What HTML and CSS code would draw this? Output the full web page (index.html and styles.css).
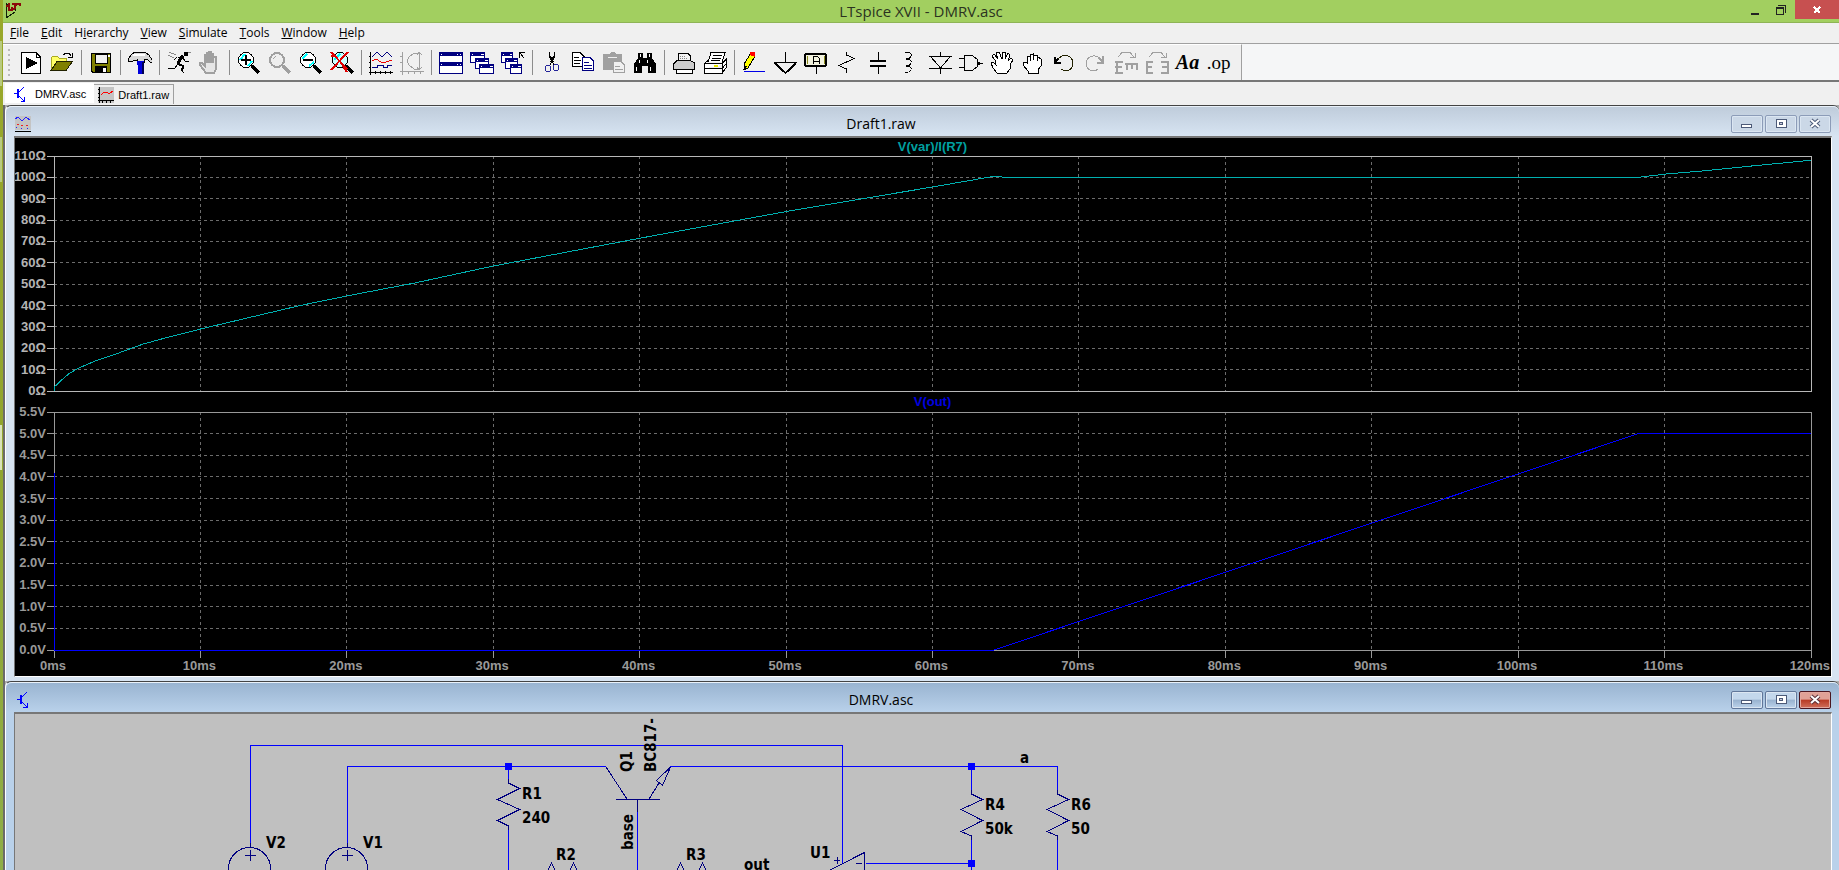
FILE: index.html
```html
<!DOCTYPE html>
<html lang="en">
<head>
<meta charset="utf-8">
<title>LTspice XVII - DMRV.asc</title>
<link rel="stylesheet" href="styles.css">
</head>
<body>
<div class="desktop">
<div class="app">
  <header class="titlebar">
    <svg class="app-icon" width="17" height="18" viewBox="0 0 17 18"><path d="M1 1V16L10 10M1 2L4 4M10 9V5" stroke="#10200a" fill="none"/><path d="M4 1V9M4 8H8M7 2H16M15 2V4M11 2L9 8M7 5V8M4 4H1" stroke="#8b0a0a" stroke-width="2" fill="none"/></svg>
    <h1 class="app-title">LTspice XVII - DMRV.asc</h1>
    <div class="app-buttons">
      <button class="app-btn" aria-label="Minimize"><svg width="10" height="12"><path d="M1 9.500H9" stroke="#222" stroke-width="2"/></svg></button>
      <button class="app-btn" aria-label="Restore"><svg width="12" height="12"><path d="M1.500 4V10.500H8.500V3.500H1M1 4.500H9M3 1.500H10.500V9" fill="none" stroke="#222"/></svg></button>
      <button class="app-btn close" aria-label="Close"><svg width="10" height="10" viewBox="0 0 10 10"><path d="M2 2L8 8M8 2L2 8" stroke="#fff" stroke-width="2"/></svg></button>
    </div>
  </header>

  <nav class="menubar">
    <button><u>F</u>ile</button><button><u>E</u>dit</button><button>H<u>i</u>erarchy</button><button><u>V</u>iew</button><button><u>S</u>imulate</button><button><u>T</u>ools</button><button><u>W</u>indow</button><button><u>H</u>elp</button>
  </nav>

  <div class="toolbar-row">
  <div class="toolbar" role="toolbar">
    <span class="grip"></span>
    <button aria-label="Control panel run"><svg viewBox="0 0 24 24"><path d="M2.500 1.500H17L21.500 6V22.500H2.500Z" fill="#fff" stroke="#000"/><path d="M17 1V6H22" fill="none" stroke="#000"/><path d="M7 6V18L19 12Z" fill="#000"/></svg></button>
    <button aria-label="Open"><svg viewBox="0 0 24 24"><path d="M1 19V7L3 5H7L9 7H16V11" fill="#ff6" stroke="#a9a920"/><path d="M1 19.500L7 10.500H22.500L16 19.500Z" fill="#808000" stroke="#222200"/><path d="M13 4L16 2H19L21 5M18 6H22V2" fill="none" stroke="#000"/></svg></button>
    <i class="sep"></i>
    <button aria-label="Save"><svg viewBox="0 0 24 24"><path d="M2.500 2.500H21.500V21.500H4L2.500 20Z" fill="#808000" stroke="#000"/><path d="M6 3H18V12H6Z" fill="#f0f0f0" stroke="#000"/><path d="M6 15H18V22H6Z" fill="#000"/><path d="M14 17H17V21H14Z" fill="#fff"/><path d="M19 4H21V6H19Z" fill="#fff"/></svg></button>
    <i class="sep"></i>
    <button aria-label="Control panel"><svg viewBox="0 0 24 24"><path d="M0 8L4 3L7 1H17L21 4L24 9V11H22L19 8L16 9V11H9V9L5 10H0Z" fill="#d8d8d8" stroke="#000"/><path d="M5 4H17" stroke="#fff" stroke-width="2"/><path d="M9 10H16V14H15V23H10V14H9Z" fill="#00d"/><path d="M14.500 11V23" stroke="#005" stroke-width="2"/></svg></button>
    <i class="sep"></i>
    <button aria-label="Run"><svg viewBox="0 0 24 24"><path d="M17 1H21V5H17Z" fill="#000"/><path d="M16 5L13 8L11 13" fill="none" stroke="#000" stroke-width="3"/><path d="M10.500 6H14M10 6L7 9M16 7L18 10H22M12 13L16 15L15 20L17 22M11 13L8 17L1 17" fill="none" stroke="#000" stroke-width="1"/><path d="M11 13L16 15L15 20" fill="none" stroke="#000" stroke-width="2"/><path d="M2 1L9 4M1 4L7 7M21 1L24 1" stroke="#888"/></svg></button>
    <button aria-label="Halt"><svg viewBox="0 0 24 24"><path d="M8 22L2 14V12H4L7 15V4H9V12V2H11V12V1H13V12V3H15V12V6H18V18L16 22Z" fill="#e6e6e6" stroke="#a0a0a0" stroke-width="2"/></svg></button>
    <i class="sep"></i>
    <button aria-label="Zoom area"><svg viewBox="0 0 24 24"><circle cx="9" cy="9" r="7.500" fill="#fff" stroke="#000"/><path d="M3 9L8 3M11 15L15 10" stroke="#0ff" stroke-width="2"/><path d="M9 4V14M4 9H14" stroke="#000" stroke-width="2"/><path d="M15 15L22 22" stroke="#000" stroke-width="3"/></svg></button>
    <button aria-label="Zoom back"><svg viewBox="0 0 24 24"><circle cx="9" cy="9" r="7" fill="#eee" stroke="#a0a0a0" stroke-width="2"/><path d="M5 8L8 5" stroke="#a0a0a0"/><path d="M15 15L22 22" stroke="#a0a0a0" stroke-width="3"/></svg></button>
    <button aria-label="Zoom out"><svg viewBox="0 0 24 24"><circle cx="9" cy="9" r="7.500" fill="#fff" stroke="#000"/><path d="M3 8L8 3M10 15L15 11" stroke="#0ff" stroke-width="2"/><path d="M4 9H14" stroke="#000" stroke-width="2"/><path d="M15 15L22 22" stroke="#000" stroke-width="3"/></svg></button>
    <button aria-label="Zoom full"><svg viewBox="0 0 24 24"><circle cx="10" cy="9" r="7.500" fill="#cff" stroke="#000"/><path d="M4 9L10 3" stroke="#0ff" stroke-width="2"/><path d="M16 15L23 22" stroke="#000" stroke-width="3"/><path d="M1 1L17 18M18 1L1 19M1 5H6M13 15L17 21" stroke="#e00000" stroke-width="2"/></svg></button>
    <i class="sep"></i>
    <button aria-label="Autorange"><svg viewBox="0 0 24 24"><path d="M1.500 1V24M0 21.500H24M0 5.500H2M0 11.500H2M0 16.500H2M6.500 20V23M11.500 20V23M16.500 20V23M21.500 20V23" stroke="#000"/><path d="M3 6L8 1L13 6L18 1L23 6M3 16H8V14H14V16H18V14H23" fill="none" stroke="#000080"/><path d="M3 10L7 8L12 11H17L23 9" fill="none" stroke="#e00" stroke-width="1"/></svg></button>
    <button aria-label="Nyquist plot"><svg viewBox="0 0 24 24"><path d="M2.500 1V24M0 20.500H24M0 5.500H2M0 11.500H2M8.500 20V23M14.500 20V23M20.500 20V23M19.500 1V19M17 4L19 1L22 4M17 16L19 19L22 16M19 2H14L9 6L7 10L9 14L14 18H19" fill="none" stroke="#a0a0a0"/></svg></button>
    <i class="sep"></i>
    <button aria-label="Tile windows"><svg viewBox="0 0 24 24"><path d="M.500 1.500H23.500V22.500H.500Z" fill="#fff" stroke="#000080"/><path d="M0 1H24V5H0ZM0 11H24V15H0Z" fill="#000080"/><path d="M2 3H3M18 3H19M21 3H22M2 13H3M18 13H19M21 13H22" stroke="#fff"/></svg></button>
    <button aria-label="Cascade windows"><svg viewBox="0 0 24 24"><g fill="#fff" stroke="#000080"><path d="M.500 1.500H14.500V11.500H.500Z"/><path d="M5.500 7.500H18.500V17.500H5.500Z"/><path d="M9.500 13.500H23.500V22.500H9.500Z"/></g><path d="M0 1H15V5H0ZM5 7H19V11H5ZM9 13H24V17H9Z" fill="#000080"/><path d="M2 3H3M11 3H14M7 9H8M15 9H18M11 15H12M20 15H23" stroke="#fff"/></svg></button>
    <button aria-label="Close all windows"><svg viewBox="0 0 24 24"><g fill="#fff" stroke="#000080"><path d="M.500 1.500H11.500V11.500H.500Z"/><path d="M4.500 7.500H16.500V17.500H4.500Z"/><path d="M9.500 13.500H20.500V22.500H9.500Z"/></g><path d="M0 1H12V5H0ZM4 7H17V11H4ZM9 13H21V17H9Z" fill="#000080"/><path d="M2 3H3M9 3H11M6 9H7M13 9H16M11 15H12M17 15H20" stroke="#fff"/><path d="M18.500 7V1.500H24M19 2L23 7" fill="none" stroke="#000"/></svg></button>
    <i class="sep"></i>
    <button aria-label="Cut"><svg viewBox="0 0 24 24"><path d="M9.500 1V6L14 14M14.500 1V6L10 14" fill="none" stroke="#000"/><path d="M10 5L13 11M14 5L11 11" stroke="#000" stroke-width="2"/><ellipse cx="8" cy="17.500" rx="2.500" ry="3.500" fill="none" stroke="#23239a" stroke-width="1"/><ellipse cx="16" cy="16.500" rx="2.500" ry="3.500" fill="none" stroke="#23239a" stroke-width="1"/></svg></button>
    <button aria-label="Copy"><svg viewBox="0 0 24 24"><path d="M1.500 1.500H9L13.500 6V15.500H1.500Z" fill="#fff" stroke="#000"/><path d="M3 6H8M3 9H10M3 12H9" stroke="#000"/><path d="M11.500 6.500H19L22.500 10V19.500H11.500Z" fill="#fff" stroke="#000080"/><path d="M13 11H18M13 14H21M13 17H21" stroke="#000080"/></svg></button>
    <button aria-label="Paste"><svg viewBox="0 0 24 24"><path d="M1 3H7L9 1H12L14 3H20V19H1Z" fill="#a0a0a0"/><path d="M6 6H15" stroke="#eee"/><path d="M11.500 10.500H19L22.500 14V21.500H11.500Z" fill="#f0f0f0" stroke="#a0a0a0"/><path d="M13 15H18M13 18H21" stroke="#a0a0a0"/></svg></button>
    <button aria-label="Find"><svg viewBox="0 0 24 24"><path d="M5 2H10V7H14V2H19V7L23 13V22H15V15H9V22H1V13L5 7Z" fill="#000"/><path d="M7.500 3V6M16.500 3V6M6.500 9V12M14.500 9V12M3.500 16V20M17.500 16V20" stroke="#fff"/></svg></button>
    <i class="sep"></i>
    <button aria-label="Print"><svg viewBox="0 0 24 24"><path d="M6 9V2.500H16L18.500 5V9" fill="#f4f4f4" stroke="#000"/><path d="M8 5H14M8 7H16" stroke="#888" stroke-dasharray="1 1"/><path d="M1.500 16V13L5 9.500H18L22.500 12V18.500H1.500Z" fill="#ccc" stroke="#000"/><path d="M4 18.500V22.500H20V18.500" fill="#fff" stroke="#000"/></svg></button>
    <button aria-label="Print setup"><svg viewBox="0 0 24 24"><path d="M5 11L8 1.500H22L19 11" fill="#fff" stroke="#000"/><path d="M10 4H19M9 7H18M8 9H17" stroke="#000"/><path d="M1.500 12.500L5 9.500M1.500 12.500H19L23.500 8V16L19 22.500H1.500ZM19 12.500V22.500M1.500 17.500H19L23 13" fill="#fff" stroke="#000"/><path d="M11 15H15" stroke="#e8e800" stroke-width="2"/></svg></button>
    <i class="sep"></i>
    <button aria-label="Wire"><svg viewBox="0 0 24 24"><path d="M9 2L13 5L6 17L2 19V13Z" fill="#ff0" stroke="#000"/><path d="M8 1H13V6L8 4Z" fill="#f00"/><path d="M2 19L4 15" stroke="#000" stroke-width="2"/><path d="M2 20.500H23" stroke="#0000e8"/></svg></button>
    <button aria-label="Ground"><svg viewBox="0 0 24 24"><path d="M12.500 1V12M1 11.500H24" fill="none" stroke="#000"/><path d="M2 12L12.500 22L23 12" fill="none" stroke="#000" stroke-width="2"/></svg></button>
    <button aria-label="Label net"><svg viewBox="0 0 24 24"><rect x="1" y="3" width="21" height="12" rx="2" fill="#f4f4e0" stroke="#000" stroke-width="2"/><path d="M3 5V13M20 5V13" stroke="#8a8a20"/><path d="M12 15V23" stroke="#000"/><path d="M9 13V7L10 5H13L15 7V13M9 10H15" fill="none" stroke="#000" stroke-width="1"/></svg></button>
    <button aria-label="Resistor"><svg viewBox="0 0 24 24"><path d="M11.500 1V4L19 7.500L4 14.500L11.500 18V22" fill="none" stroke="#000"/></svg></button>
    <button aria-label="Capacitor"><svg viewBox="0 0 24 24"><path d="M12 1V10M12 15V23" stroke="#000"/><path d="M4 10H20M4 15H20" stroke="#000" stroke-width="2"/></svg></button>
    <button aria-label="Inductor"><svg viewBox="0 0 24 24"><path d="M8 1.500H11Q15 2 14 5Q13 8 9 8Q15 8 14 12Q13 15 9 15Q15 15 14 19Q13 21.500 8 21.500" fill="none" stroke="#000" stroke-width="1"/></svg></button>
    <button aria-label="Diode"><svg viewBox="0 0 24 24"><path d="M12.500 1V6M12.500 17V23M1 5.500H24M1 17.500H24M3 6L12.500 17L22 6" fill="none" stroke="#000"/></svg></button>
    <button aria-label="Component"><svg viewBox="0 0 24 24"><path d="M5.500 4.500H13L18 8L19 12L18 16L13 19.500H5.500ZM0 7.500H5M0 16.500H5M19 12H24" fill="none" stroke="#000"/><path d="M19 12H21" stroke="#000" stroke-width="3"/></svg></button>
    <button aria-label="Move"><svg viewBox="0 0 24 24"><path d="M7 22L3 17L1 12L3 11L6 14L5 9L2 5L4 3L8 8L6 2L9 1L12 8V1L15 1V8L18 2L20 4L18 10L21 7L23 9L20 14V18L17 22Z" fill="#fff" stroke="#000"/></svg></button>
    <button aria-label="Drag"><svg viewBox="0 0 24 24"><path d="M7 22V20L2 14V11H5L6 12V6L9 5V10V4L12 3V9L13 4H16V10L17 6L20 8V15L17 19V22Z" fill="#fff" stroke="#000"/></svg></button>
    <button aria-label="Undo"><svg viewBox="0 0 24 24"><path d="M5 10Q8 4.500 13 4.500Q21 5 21 12.500Q20 20 13 20L9 18" fill="none" stroke="#222200"/><path d="M3 6V12H9M3 11L6 8" fill="none" stroke="#000" stroke-width="2"/></svg></button>
    <button aria-label="Redo"><svg viewBox="0 0 24 24"><path d="M20 11Q16 4 10 5Q3 6 3 13Q4 20 12 20L15 18" fill="none" stroke="#a0a0a0"/><path d="M20 5V12H14M20 11L16 7" fill="none" stroke="#a0a0a0" stroke-width="2"/></svg></button>
    <button aria-label="Rotate"><svg viewBox="0 0 24 24"><path d="M1 11H9M1 16H8M1 22H9M2.500 10V23M11 13H24M12.500 13V19M18 13V18M23 13V19" fill="none" stroke="#a0a0a0" stroke-width="2"/><path d="M4 6L8 1.500H16L20 6M16 6H21V2" fill="none" stroke="#a0a0a0"/></svg></button>
    <button aria-label="Mirror"><svg viewBox="0 0 24 24"><path d="M1 11H8M1 16H7M1 22H8M2 10V23M16 11H24M17 16H24M16 22H24M23 10V23" fill="none" stroke="#a0a0a0" stroke-width="2"/><path d="M4 6L8 1.500H16L20 6M16 6H21V2" fill="none" stroke="#a0a0a0"/></svg></button>
    <button class="glyph" aria-label="Text">Aa</button>
    <button class="glyph op" aria-label="SPICE directive">.op</button>
  </div>
  </div>

  <div class="tabs" role="tablist">
    <button class="tab active" role="tab"><svg width="16" height="16" viewBox="0 0 16 16"><path d="M0 7.500H4M10 1L5 6M5 10L10 15M10 11V15H7" fill="none" stroke="#00f"/><path d="M4 3V12" stroke="#00f" stroke-width="2"/></svg>DMRV.asc</button>
    <button class="tab" role="tab"><svg width="16" height="16" viewBox="0 0 16 16"><path d="M0 0H16V16H0Z" fill="#c4c4c4"/><path d="M1.500 0V16M0 13.500H16M4.500 13V16M8.500 13V16M12.500 13V16M0 2.500H2M0 6.500H2M0 10.500H2" stroke="#000"/><path d="M3 8L6 5L9 5L11 7L15 4" fill="none" stroke="#f00" stroke-width="1"/></svg>Draft1.raw</button>
  </div>

  <main class="workspace">
    <section class="mdi">
      <header class="mdi-title">
        <svg width="16" height="16" viewBox="0 0 16 16"><path d="M0 0H16V14H0Z" fill="#c4c4c4"/><path d="M0 15H16" stroke="#000" stroke-width="1"/><path d="M0 3L3 1L7 5L11 1L15 4" fill="none" stroke="#22f"/><path d="M2 8H4M6 9H8M11 9H13" stroke="#e22" stroke-width="1"/><path d="M1 11H2M6 12H7M12 12H13" stroke="#22f"/></svg>
        <h2>Draft1.raw</h2>
        <div class="mdi-buttons">
          <button aria-label="Minimize"><svg width="12" height="12"><path d="M.500 6.500H10.500V9.500H.500Z" fill="#fff" stroke="#4c5a78"/></svg></button>
          <button aria-label="Maximize"><svg width="12" height="12"><path d="M1 1.500H11V9.500H1Z" fill="#fff" stroke="#4c5a78"/><path d="M4.500 4.500H7.500V6.500H4.500Z" fill="#ccd" stroke="#4c5a78"/></svg></button>
          <button aria-label="Close"><svg class="smooth" width="12" height="12" viewBox="0 0 12 12"><path d="M2 2L10 9M10 2L2 9" stroke="#4c5a78" stroke-width="4"/><path d="M2 2L10 9M10 2L2 9" stroke="#fff" stroke-width="2"/></svg></button>
        </div>
      </header>
      <div class="plots">
        <h3 class="trace teal">V(var)/I(R7)</h3>
        <ul class="y-axis bright"><li>110Ω</li><li>100Ω</li><li>90Ω</li><li>80Ω</li><li>70Ω</li><li>60Ω</li><li>50Ω</li><li>40Ω</li><li>30Ω</li><li>20Ω</li><li>10Ω</li><li>0Ω</li></ul>
        <svg class="pane upper" viewBox="0 0 1200 220" preserveAspectRatio="none">
          <path class="grid" d="M0 20H1200M0 40H1200M0 60H1200M0 80H1200M0 100H1200M0 120H1200M0 140H1200M0 160H1200M0 180H1200M0 200H1200M100 0V220M200 0V220M300 0V220M400 0V220M500 0V220M600 0V220M700 0V220M800 0V220M900 0V220M1000 0V220M1100 0V220"/>
          <path class="frame light" d="M0 0H1200V220H0ZM-5 0H0M-5 20H0M-5 40H0M-5 60H0M-5 80H0M-5 100H0M-5 120H0M-5 140H0M-5 160H0M-5 180H0M-5 200H0M-5 220H0"/>
          <path class="line teal-line" d="M0 220V216L2 214L5 210L10 204L16 199L28 192L41 186L61 176L77 170L100 162L168 140L200 131L246 119L300 103L400 77L500 52L600 29L642 19L650 20H1082L1100 17L1126 14L1162 9L1200 4"/>
        </svg>
        <h3 class="trace blue">V(out)</h3>
        <ul class="y-axis"><li>5.5V</li><li>5.0V</li><li>4.5V</li><li>4.0V</li><li>3.5V</li><li>3.0V</li><li>2.5V</li><li>2.0V</li><li>1.5V</li><li>1.0V</li><li>0.5V</li><li>0.0V</li></ul>
        <svg class="pane lower" viewBox="0 0 1200 220" preserveAspectRatio="none">
          <path class="grid" d="M0 20H1200M0 40H1200M0 60H1200M0 80H1200M0 100H1200M0 120H1200M0 140H1200M0 160H1200M0 180H1200M0 200H1200M100 0V220M200 0V220M300 0V220M400 0V220M500 0V220M600 0V220M700 0V220M800 0V220M900 0V220M1000 0V220M1100 0V220"/>
          <path class="frame" d="M0 0H1200V220H0ZM-5 0H0M-5 20H0M-5 40H0M-5 60H0M-5 80H0M-5 100H0M-5 120H0M-5 140H0M-5 160H0M-5 180H0M-5 200H0M-5 220H0M0 220V227M100 220V227M200 220V227M300 220V227M400 220V227M500 220V227M600 220V227M700 220V227M800 220V227M900 220V227M1000 220V227M1100 220V227M1200 220V227"/>
          <path class="line blue-line" d="M0 56V220H642L1082 20H1200"/>
        </svg>
        <ul class="x-axis"><li>0ms</li><li>10ms</li><li>20ms</li><li>30ms</li><li>40ms</li><li>50ms</li><li>60ms</li><li>70ms</li><li>80ms</li><li>90ms</li><li>100ms</li><li>110ms</li><li>120ms</li></ul>
      </div>
    </section>

    <section class="mdi focused">
      <header class="mdi-title">
        <svg width="16" height="16" viewBox="0 0 16 16"><path d="M2 7.500H6M12 0L7 5M7 10L12 15M12 11V15H8" fill="none" stroke="#00f"/><path d="M6 3V12" stroke="#00f" stroke-width="2"/></svg>
        <h2>DMRV.asc</h2>
        <div class="mdi-buttons">
          <button aria-label="Minimize"><svg width="12" height="12"><path d="M.500 6.500H10.500V9.500H.500Z" fill="#fff" stroke="#4c5a78"/></svg></button>
          <button aria-label="Maximize"><svg width="12" height="12"><path d="M1 1.500H11V9.500H1Z" fill="#fff" stroke="#4c5a78"/><path d="M4.500 4.500H7.500V6.500H4.500Z" fill="#ccd" stroke="#4c5a78"/></svg></button>
          <button class="close" aria-label="Close"><svg class="smooth" width="12" height="12" viewBox="0 0 12 12"><path d="M2 2L10 9M10 2L2 9" stroke="#5a3038" stroke-width="4"/><path d="M2 2L10 9M10 2L2 9" stroke="#fff" stroke-width="2"/></svg></button>
        </div>
      </header>
      <div class="schematic">
        <svg width="1100" height="180" viewBox="15 714 1100 180">
          <path class="wire" d="M250.500 843V745.500H842.500V863M347.500 843V766.500H606M508.500 766V779M508.500 830V894M670 766.500H1057.500V790M971.500 766V790M971.500 840V894M1057.500 840V894M866 863.500H971.500M637.500 812V894"/>
          <path class="part" d="M250.500 843V848M347.500 843V848M245 855.500H256M250.500 850V861M342 855.500H353M347.500 850V861M508.500 779V783L519.500 788.500L497.500 799.500L519.500 809.500L497.500 820.500L508.500 826V830M971.500 790V794L982.500 799.500L961 809.500L982.500 820.500L961 831.500L971.500 836V840M1057.500 790V794L1068.500 799.500L1047 809.500L1068.500 820.500L1047 831.500L1057.500 836V840M606 767L627 799M616 799.500H660M637.500 800V812M649 799L659 783M656.500 780.500L662.500 785.500L670.500 767ZM822 874L864.500 852.500V894M834 860.500H840M837.500 857V864M856 863.500H862M546 874L551.500 863L557 874M568 874L573.500 863L579 874M675 874L680.500 863L686 874M697 874L702.500 863L708 874"/>
          <circle class="part" cx="249.500" cy="868.500" r="21"/><circle class="part" cx="346.500" cy="868.500" r="21"/>
          <path fill="#00f" d="M505 763H512V770H505ZM968 763H975V770H968ZM968 860H975V867H968Z"/>
          <g class="names">
            <text x="266" y="848">V2</text><text x="363" y="848">V1</text>
            <text x="522" y="799">R1</text><text x="522" y="823">240</text>
            <text x="556" y="860">R2</text><text x="686" y="860">R3</text>
            <text x="744" y="870">out</text><text x="810" y="858">U1</text>
            <text x="985" y="810">R4</text><text x="985" y="834">50k</text>
            <text x="1071" y="810">R6</text><text x="1071" y="834">50</text>
            <text x="1020" y="763">a</text>
            <text transform="translate(632 772) rotate(-90)">Q1</text>
            <text transform="translate(656 772) rotate(-90)">BC817-</text>
            <text transform="translate(633 850) rotate(-90)">base</text>
          </g>
        </svg>
      </div>
    </section>
  </main>
</div>
</div>
</body>
</html>
```
FILE: styles.css
```css
* { box-sizing: border-box; }
body { margin: 0; font-family: "Open Sans", "Noto Sans", sans-serif; font-size: 12px; color: #000; }
h1, h2, h3, ul { margin: 0; padding: 0; list-style: none; }
h1, h2 { font-weight: 400; }
button { font: inherit; color: inherit; border: 0; padding: 0; background: none; }
svg { display: block; shape-rendering: crispEdges; }
.smooth { shape-rendering: auto; }

.desktop { height: 100vh; display: flex; padding-left: 3px; overflow: hidden; background: linear-gradient(#b9ca80, #b9ca80) 0 41px / 2px 45px no-repeat, linear-gradient(#b9ca80, #b9ca80) 0 137px / 2px 45px no-repeat, linear-gradient(#d9e2b8, #d9e2b8) 0 425px / 2px 45px no-repeat, linear-gradient(#9aa82a, #92a52e 50%, #8fae48); }
.app { flex: 1; min-width: 0; display: flex; flex-direction: column; background: #f0f0f0; }

.titlebar { height: 23px; display: grid; grid-template-columns: 1fr auto 1fr; background: #a2cf60; border-bottom: 1px solid #8eb456; }
.app-icon { margin: 2px 0 0 2px; }
.app-title { font-size: 15px; line-height: 22px; color: #2b331f; }
.app-buttons { display: flex; justify-content: flex-end; align-items: flex-start; }
.app-btn { height: 19px; width: 26px; display: flex; align-items: center; justify-content: center; }
.app-btn.close { width: 44px; margin-left: 1px; background: #c75050; }

.menubar { height: 20px; display: flex; padding-left: 1px; }
.menubar button { padding: 0 6px; line-height: 20px; }
.menubar u { text-underline-offset: 1px; }

.toolbar-row { height: 39px; border-top: 1px solid #a0a0a0; border-bottom: 2px solid #777; background: #f5f6f7; display: flex; }
.toolbar { display: flex; align-items: center; padding-right: 7px; background: #f0f0f0; border-top: 1px solid #fff; border-right: 1px solid #a0a0a0; }
.toolbar button { width: 31px; height: 34px; display: flex; align-items: center; justify-content: center; }
.toolbar svg { width: 24px; height: 24px; }
.grip { width: 2px; height: 28px; margin: 0 5px; background: repeating-linear-gradient(#bbb 0 2px, #f0f0f0 2px 5px); }
.sep { width: 1px; height: 25px; margin: 0 3px 0 4px; background: #8c8c8c; }
.toolbar .glyph { font: italic 700 20px "Liberation Serif", serif; }
.toolbar .op { font-style: normal; font-weight: 400; font-size: 19px; }

.tabs { height: 23px; display: flex; align-items: flex-start; padding: 1px 0 0 2px; }
.tab { display: flex; align-items: center; gap: 4px; height: 20px; margin-top: 1px; padding: 0 4px; font: 11px "Liberation Sans", Arial, sans-serif; border: 1px solid #a0a0a0; border-width: 1px 1px 0 0; }
.tab.active { height: 20px; margin: 0; padding: 0 7px 0 9px; gap: 5px; background: #fff; border-color: #fff; }

.workspace { flex: 1; min-height: 0; display: flex; flex-direction: column; border-left: 2px solid #6b6b6b; background: #ababab; }
.mdi { padding: 0 7px 4px 8px; background: #d7e4f2; border-top: 1px solid #444; border-left: 1px solid #fff; border-radius: 6px 6px 0 0; }
.mdi.focused { flex: 1; min-height: 0; display: flex; flex-direction: column; padding-bottom: 0; background: #b9d1ea; }
.mdi-title { height: 30px; margin: 0 -7px 0 -8px; padding: 4px 8px 0 9px; display: flex; align-items: center; border-top: 1px solid #e9f1f9; border-radius: 6px 6px 0 0; background: linear-gradient(#bfccdb, #d7e4f2); }
.focused .mdi-title { background: linear-gradient(#99b4d1, #b9d1ea); }
.mdi-title h2 { flex: 1; text-align: center; font-size: 14px; line-height: 20px; }
.mdi-buttons { display: flex; gap: 2px; }
.mdi-buttons button { width: 32px; height: 18px; display: flex; align-items: center; justify-content: center; border: 1px solid #8c9cb8; border-radius: 2px; box-shadow: inset 0 0 0 1px #dbe6f2; background: #cbd8e7; }
.focused .mdi-buttons button { border-color: #61779a; background: linear-gradient(#c3d7ec 45%, #98b2cf 50%, #bcd3eb); }
.focused .mdi-buttons .close { border-color: #4a1620; box-shadow: inset 0 0 0 1px #e2a79e; background: linear-gradient(#e0a196 45%, #b83a24 50%, #d0705c); }

.plots { display: grid; grid-template-columns: 39px 1fr 20px; grid-template-rows: 18px 235px 21px 238px 26px; background: #000; overflow: hidden; font: 700 13px "Liberation Sans", Arial, sans-serif; color: #999; border: 1px solid #fff; border-top: 2px solid #777; border-left-color: #777; }
.trace { grid-column: 2; text-align: center; font-size: 13px; line-height: 18px; }
.teal { color: #00a0a0; }
.blue { color: #0000e0; line-height: 21px; }
.y-axis { grid-column: 1; display: flex; flex-direction: column; justify-content: space-between; margin: -10px 8px -10px -8px; text-align: right; line-height: 20px; }
.y-axis.bright { color: #b4b4b4; }
.pane { grid-column: 2; width: 100%; height: 100%; overflow: visible; fill: none; }
.pane path { vector-effect: non-scaling-stroke; stroke-width: 1px; }
.grid { stroke: #6c6c6c; stroke-dasharray: 3 3; }
.frame { stroke: #999; }
.frame.light { stroke: #b8b8b8; }
.teal-line { stroke: #00b0b0; }
.blue-line { stroke: #00f; }
.x-axis { grid-column: 2; display: flex; justify-content: space-between; margin: 7px -20px 0 -22px; line-height: 18px; }
.x-axis li { width: 42px; text-align: center; white-space: nowrap; }

.schematic { flex: 1; min-height: 0; overflow: hidden; background: #c0c0c0; border: 2px solid #777; border-width: 2px 1px 0 1px; border-right-color: #fff; }
.wire { fill: none; stroke: #00f; }
.part { fill: none; stroke: #000080; }
.names { font: 700 15px "DejaVu Sans Condensed", "DejaVu Sans", sans-serif; fill: #000; }
```
